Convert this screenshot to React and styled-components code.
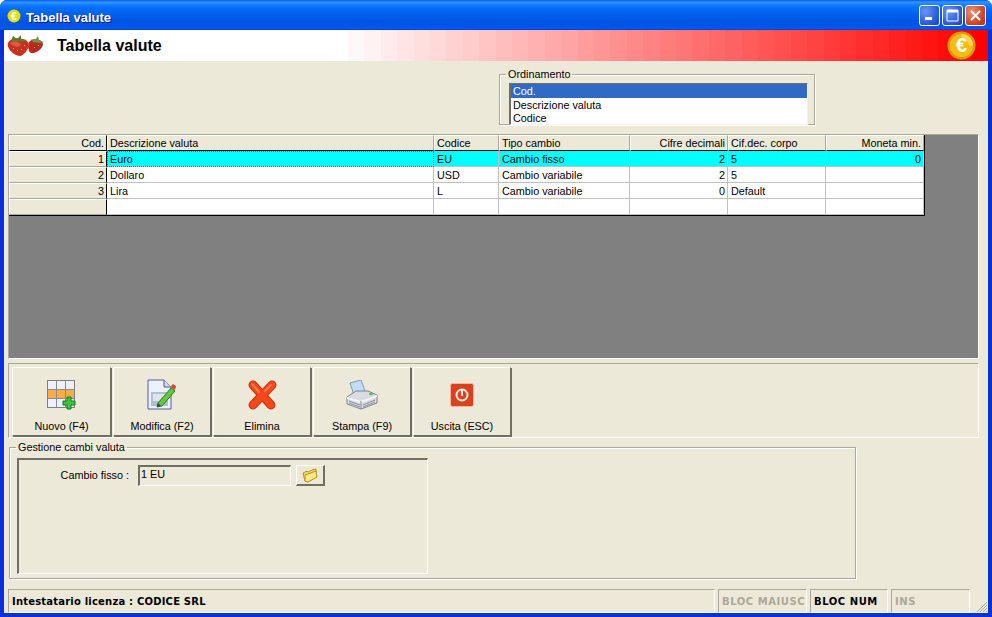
import React from 'react';
import styled, { createGlobalStyle } from 'styled-components';

const GlobalStyle = createGlobalStyle`
  html, body { margin: 0; padding: 0; background: #fff; }
  body { font-family: "Liberation Sans", Arial, sans-serif; font-size: 10.8px; color: #000; }
`;

const columns = [
  { title: 'Cod.', width: 98, right: true },
  { title: 'Descrizione valuta', width: 327 },
  { title: 'Codice', width: 65 },
  { title: 'Tipo cambio', width: 131 },
  { title: 'Cifre decimali', width: 98, right: true },
  { title: 'Cif.dec. corpo', width: 98 },
  { title: 'Moneta min.', width: 98, right: true },
];

const rows = [
  ['1', 'Euro', 'EU', 'Cambio fisso', '2', '5', '0'],
  ['2', 'Dollaro', 'USD', 'Cambio variabile', '2', '5', ''],
  ['3', 'Lira', 'L', 'Cambio variabile', '0', 'Default', ''],
  ['', '', '', '', '', '', ''],
];

// the banner fades in visible bands, not smoothly
const bannerBands = () => {
  const start = 344;
  const end = 984;
  const band = 16.4;
  const stops = ['#fff 0', `#fff ${start}px`];
  for (let x = start; x < end; x += band) {
    const t = (x - start + band) / (end - start);
    const v = Math.max(0, Math.round(255 - t * 255));
    stops.push(`rgb(255,${v},${v}) ${x}px`, `rgb(255,${v},${v}) ${x + band}px`);
  }
  return `linear-gradient(90deg, ${stops.join(',')})`;
};

const Frame = styled.div`
  width: 992px;
  height: 617px;
  display: flex;
  flex-direction: column;
  overflow: hidden;
  border-radius: 7px 7px 0 0;
  background: #0831d9;
`;

const TitleBar = styled.div`
  height: 30px;
  flex: none;
  display: flex;
  align-items: center;
  padding: 1px 7px 0;
  box-sizing: border-box;
  background: linear-gradient(180deg, #0058ee 0, #3593ff 2px, #288eff 3px, #127dff 5px, #036ffc 8px, #0262ee 13px, #0057e5 20px, #0054e3 24px, #0055eb 27px, #005bf5 29px, #0031b0 30px);
`;

const TitleText = styled.span`
  margin: 3px 0 0 5px;
  color: #fff;
  font-family: "Liberation Sans", Arial, sans-serif;
  font-size: 13px;
  font-weight: 700;
  text-shadow: 1px 1px #0f1089;
`;

const WindowControls = styled.div`
  margin-left: auto;
  display: flex;
  gap: 2px;
  margin-right: -1px;
`;

const WindowButton = styled.div`
  width: 21px;
  height: 21px;
  box-sizing: border-box;
  border: 1px solid #fff;
  border-radius: 3px;
  background: ${(p) =>
    p.$close
      ? 'radial-gradient(circle at 30% 30%, #e8917a, #d3492a 60%, #b5310f)'
      : 'radial-gradient(circle at 30% 30%, #6d96f2, #2f5fdc 60%, #1c3fbd)'};
  display: flex;
  align-items: center;
  justify-content: center;
`;

const Client = styled.div`
  flex: 1;
  margin: 0 4px 4px;
  background: #ece9d8;
  display: flex;
  flex-direction: column;
  min-height: 0;
`;

const Banner = styled.div`
  height: 31px;
  flex: none;
  display: flex;
  align-items: center;
  padding: 0 12px 0 3px;
  box-sizing: border-box;
  background: ${bannerBands()};
`;

const BannerTitle = styled.h1`
  margin: 0 0 0 13px;
  font-size: 16px;
  font-weight: 700;
  font-family: "Liberation Sans", Arial, sans-serif;
`;

const BannerCoin = styled.div`
  margin-left: auto;
  display: flex;
`;

const SortArea = styled.div`
  height: 73px;
  flex: none;
  box-sizing: border-box;
  padding: 8px 0 0 495px;
`;

const GroupBox = styled.fieldset`
  margin: 0;
  box-sizing: border-box;
  width: ${(p) => p.$width}px;
  height: ${(p) => p.$height}px;
  padding: 0;
  border: 1px solid #aca899;
  box-shadow: 1px 1px 0 #fff, inset 1px 1px 0 #fff;
  border-radius: 0;
  display: block;
  min-width: 0;
`;

const GroupLegend = styled.legend`
  margin-left: 6px;
  padding: 0 2px;
  font-size: 10.8px;
  line-height: 11px;
  color: #000;
`;

const SortList = styled.ul`
  list-style: none;
  margin: 3px 0 0 9px;
  padding: 0;
  width: 299px;
  height: 42px;
  box-sizing: border-box;
  background: #fff;
  border-top: 1px solid #716f64;
  border-left: 2px solid #716f64;
  border-right: 1px solid #f5f3ea;
  border-bottom: 1px solid #f5f3ea;
`;

const SortItem = styled.li`
  height: ${(p) => (p.$selected ? 14 : 13)}px;
  line-height: 14px;
  padding-left: 2px;
  background: ${(p) => (p.$selected ? '#316ac5' : 'transparent')};
  color: ${(p) => (p.$selected ? '#fff' : '#000')};
`;

const GridArea = styled.div`
  height: 225px;
  flex: none;
  margin: 0 9px 0 4px;
  background: #808080;
  box-sizing: border-box;
  border-top: 1px solid #aca899;
  border-left: 1px solid #aca899;
  border-right: 1px solid #fff;
  border-bottom: 1px solid #fff;
`;

const Grid = styled.div`
  width: 916px;
  border-right: 1px solid #000;
  border-bottom: 1px solid #000;
  box-sizing: border-box;
`;

const GridRow = styled.div`
  display: flex;
  height: 16px;
  box-sizing: border-box;
  background: ${(p) => (p.$active ? '#00ffff' : '#fff')};
`;

const HeaderCell = styled.div`
  width: ${(p) => p.$width}px;
  box-sizing: border-box;
  flex: none;
  height: 16px;
  line-height: 15px;
  padding: 0 2px;
  white-space: nowrap;
  overflow: hidden;
  text-align: ${(p) => (p.$right ? 'right' : 'left')};
  background: #ece9d8;
  border-top: 1px solid #fff;
  border-left: 1px solid #fff;
  border-bottom: 1px solid #000;
  border-right: 1px solid ${(p) => (p.$first ? '#000' : '#aca899')};
`;

const Cell = styled.div`
  width: ${(p) => p.$width}px;
  box-sizing: border-box;
  flex: none;
  height: 16px;
  line-height: 17px;
  padding: 0 2px 0 3px;
  white-space: nowrap;
  overflow: hidden;
  text-align: ${(p) => (p.$right ? 'right' : 'left')};
  border-bottom: 1px solid #c0c0c0;
  border-right: 1px solid #c0c0c0;
`;

const RowHeadCell = styled(Cell)`
  background: #ece9d8;
  border-top: 1px solid #fff;
  border-left: 1px solid #fff;
  border-bottom: 1px solid #aca899;
  border-right: 1px solid #000;
  line-height: 15px;
`;

const FocusCell = styled(Cell)`
  outline: 1px dotted #e03030;
  outline-offset: -1px;
`;

const ToolPanel = styled.div`
  height: 75px;
  flex: none;
  margin: 4px 9px 0 4px;
  padding: 3px 0 0 3px;
  box-sizing: border-box;
  display: flex;
  gap: 2px;
  border-top: 1px solid #aca899;
  border-left: 1px solid #aca899;
  border-right: 1px solid #fff;
  border-bottom: 1px solid #fff;
`;

const ToolButton = styled.button`
  width: ${(p) => p.$width || 98}px;
  height: 69px;
  box-sizing: border-box;
  padding: 10px 0 0;
  margin: 0;
  display: flex;
  flex-direction: column;
  align-items: center;
  font-family: "Liberation Sans", Arial, sans-serif;
  font-size: 10.8px;
  color: #000;
  background: #ece9d8;
  border-top: 1px solid #fff;
  border-left: 1px solid #fff;
  border-right: 1px solid #716f64;
  border-bottom: 1px solid #716f64;
  box-shadow: 1px 1px 0 #716f64;
`;

const ToolIcon = styled.span`
  height: 34px;
  display: flex;
  align-items: center;
  justify-content: center;
`;

const ToolLabel = styled.span`
  margin-top: 8px;
  line-height: 13px;
`;

const ExchangeArea = styled.div`
  margin: 4px 0 0 5px;
  flex: none;
`;

const InnerPanel = styled.div`
  width: 411px;
  height: 116px;
  margin: 5px 0 0 7px;
  box-sizing: border-box;
  padding: 5px 0 0 0;
  border-top: 2px solid #716f64;
  border-left: 2px solid #716f64;
  border-right: 1px solid #fff;
  border-bottom: 1px solid #fff;
  display: flex;
  align-items: flex-start;
`;

const FieldLabel = styled.label`
  width: 110px;
  flex: none;
  text-align: right;
  line-height: 21px;
`;

const ReadonlyField = styled.div`
  width: 153px;
  height: 21px;
  margin-left: 9px;
  box-sizing: border-box;
  padding-left: 1px;
  line-height: 14px;
  border-top: 2px solid #716f64;
  border-left: 2px solid #716f64;
  border-right: 1px solid #fff;
  border-bottom: 1px solid #fff;
`;

const FolderButton = styled.button`
  width: 29px;
  height: 21px;
  margin: 0 0 0 5px;
  padding: 0;
  display: flex;
  align-items: center;
  justify-content: center;
  box-sizing: border-box;
  background: #ece9d8;
  border-top: 1px solid #fff;
  border-left: 1px solid #fff;
  border-right: 2px solid #716f64;
  border-bottom: 2px solid #716f64;
`;

const StatusBar = styled.div`
  margin: 10px 0 0 4px;
  height: 24px;
  flex: none;
  display: flex;
  gap: 3px;
  position: relative;
`;

const StatusPanel = styled.div`
  width: ${(p) => p.$width}px;
  box-sizing: border-box;
  padding: 1px 0 0 3px;
  line-height: 22px;
  flex: none;
  white-space: nowrap;
  overflow: hidden;
  font-family: "DejaVu Sans", sans-serif;
  font-size: 10px;
  font-weight: 700;
  letter-spacing: ${(p) => (p.$key ? '0.55px' : '0.2px')};
  color: ${(p) => (p.$off ? '#aca899' : '#000')};
  border-top: 1px solid #aca899;
  border-left: 1px solid #aca899;
  border-right: 1px solid #fff;
  border-bottom: 1px solid #fff;
`;

const Grip = styled.svg`
  position: absolute;
  right: 0;
  bottom: 0;
`;

const FruitIcon = () => (
  <svg width="37" height="22" viewBox="0 0 37 22">
    <path d="M23 6 C27 3 35 4 36 9 C36 14 28 19 24 18 C21 17 20 9 23 6 Z" fill="#b52c1c" />
    <path d="M1 8 C4 2 16 2 21 7 C24 11 18 20 13 21 C8 21 -1 14 1 8 Z" fill="#c83020" />
    <path d="M3 8 C7 5 12 6 14 10 C11 13 6 12 3 8 Z" fill="#de5a3c" />
    <g fill="#e8a080">
      <rect x="6" y="13" width="1" height="1" /><rect x="10" y="15" width="1" height="1" />
      <rect x="14" y="14" width="1" height="1" /><rect x="17" y="10" width="1" height="1" />
      <rect x="27" y="12" width="1" height="1" /><rect x="31" y="10" width="1" height="1" />
    </g>
    <path d="M6 1 L10 4 L14 0 L14 4 L20 5 L16 7 L10 6 L4 6 Z" fill="#5d7a2e" />
    <path d="M24 4 L28 5 L31 1 L32 5 L37 7 L32 8 L26 7 Z" fill="#7c9440" />
  </svg>
);

const CoinIcon = () => (
  <svg width="29" height="29" viewBox="0 0 29 29">
    <circle cx="14.5" cy="14.5" r="14" fill="#d99a08" />
    <circle cx="14.5" cy="14.5" r="11.5" fill="#f4bd13" />
    <path d="M14.5 3 A11.5 11.5 0 0 1 26 14.5 L22 14.5 A8 8 0 0 0 14.5 7 Z" fill="#fbd64a" />
    <text x="14.5" y="21" textAnchor="middle" fontFamily="Liberation Sans" fontWeight="700" fontSize="20" fill="#fff">€</text>
  </svg>
);

const TitleCoin = () => (
  <svg width="14" height="14" viewBox="0 0 14 14">
    <circle cx="7" cy="7" r="6.5" fill="#e6e000" />
    <text x="7" y="11" textAnchor="middle" fontFamily="Liberation Sans" fontWeight="700" fontSize="11" fill="#fff">€</text>
  </svg>
);

const NewIcon = () => (
  <svg width="30" height="30" viewBox="0 0 30 30">
    <rect x="0.500" y="0.500" width="27" height="27" fill="#eef0fb" stroke="#7f7f86" />
    <rect x="1" y="10" width="26" height="8.500" fill="#f5ad48" />
    <path d="M9.500 1 V27 M18.500 1 V27 M1 9.500 H27 M1 18.500 H27" stroke="#8a8a90" fill="none" />
    <path d="M20 17 H24 V21 H28 V25 H24 V29 H20 V25 H16 V21 H20 Z" fill="#3ec43c" stroke="#0f7a1c" />
  </svg>
);

const EditIcon = () => (
  <svg width="30" height="32" viewBox="0 0 30 32">
    <path d="M1 1 H17 L24 8 V30 H1 Z" fill="#eef1fb" stroke="#4a5f9c" />
    <path d="M17 1 V8 H24" fill="#cfd8f0" stroke="#4a5f9c" />
    <rect x="4" y="13" width="17" height="14" fill="#b4bdd6" />
    <rect x="6" y="15" width="13" height="7" fill="#dfe3ee" />
    <path d="M11 24 L24 9 L28 12 L15 27 L10 28 Z" fill="#63c83c" stroke="#2f7a22" />
    <path d="M24 7 L26 5 L29 7 L28 11 L25 9 Z" fill="#d8432a" />
    <path d="M10 28 L11 24 L14 27 Z" fill="#444" />
  </svg>
);

const DeleteIcon = () => (
  <svg width="30" height="30" viewBox="0 0 30 30">
    <path d="M6 5 L24 25 M25 5 L6 25" stroke="#c2300c" strokeWidth="9" strokeLinecap="round" fill="none" />
    <path d="M6 5 L24 25 M25 5 L6 25" stroke="#f4481c" strokeWidth="7" strokeLinecap="round" fill="none" />
    <path d="M5 4 L12 12 M24 5 L18 11" stroke="#fb7a4a" strokeWidth="2" strokeLinecap="round" fill="none" />
  </svg>
);

const PrintIcon = () => (
  <svg width="32" height="30" viewBox="0 0 32 30">
    <path d="M4 3 L15 0 L19 11 L8 15 Z" fill="#c5dcf7" stroke="#7c9ac0" />
    <path d="M1 17 L10 11 H22 L31 15 V23 L15 29 L1 24 Z" fill="#d9dce3" stroke="#80848e" />
    <path d="M1 17 L15 21 L31 15 V17 L15 23 L1 19 Z" fill="#f5f6f8" />
    <path d="M15 21 V29 M3 21 L14 25 M3 23 L14 27 M17 25 L29 20 M17 27 L29 22" stroke="#8a8e98" fill="none" />
    <ellipse cx="25" cy="14" rx="2" ry="1.200" fill="#4fc34a" />
  </svg>
);

const ExitIcon = () => (
  <svg width="24" height="24" viewBox="0 0 24 24">
    <rect x="0.500" y="0.500" width="23" height="23" rx="2" fill="#d8421c" stroke="#f0b8a0" />
    <circle cx="12" cy="12" r="5.500" fill="none" stroke="#fbe9e0" strokeWidth="2" />
    <path d="M12 7 V13" stroke="#fbe9e0" strokeWidth="2" />
  </svg>
);

const FolderIcon = () => (
  <svg width="16" height="15" viewBox="0 0 16 15">
    <path d="M1 5 L5 3 L6 4 L10 2 L14 1 V9 L6 14 L3 13 Z" fill="#f8d860" stroke="#b89020" />
    <path d="M3 7 L14 3 L15 9 L6 14 L3 13 Z" fill="#fbe888" stroke="#b89020" />
  </svg>
);

const tools = [
  { label: 'Nuovo (F4)', icon: <NewIcon />, width: 99 },
  { label: 'Modifica (F2)', icon: <EditIcon /> },
  { label: 'Elimina', icon: <DeleteIcon /> },
  { label: 'Stampa (F9)', icon: <PrintIcon /> },
  { label: 'Uscita (ESC)', icon: <ExitIcon /> },
];

export default function App() {
  return (
    <Frame>
      <GlobalStyle />
      <TitleBar>
        <TitleCoin />
        <TitleText>Tabella valute</TitleText>
        <WindowControls>
          <WindowButton>
            <svg width="11" height="11" viewBox="0 0 11 11"><rect x="1" y="7" width="7" height="3" fill="#fff" /></svg>
          </WindowButton>
          <WindowButton>
            <svg width="13" height="13" viewBox="0 0 13 13"><path d="M1 1 H12 V12 H1 Z M1 3 H12" fill="none" stroke="#fff" strokeWidth="1" /><rect x="1" y="1" width="11" height="2" fill="#fff" /></svg>
          </WindowButton>
          <WindowButton $close>
            <svg width="13" height="13" viewBox="0 0 13 13"><path d="M2 2 L11 11 M11 2 L2 11" stroke="#fff" strokeWidth="2" /></svg>
          </WindowButton>
        </WindowControls>
      </TitleBar>
      <Client>
        <Banner>
          <FruitIcon />
          <BannerTitle>Tabella valute</BannerTitle>
          <BannerCoin><CoinIcon /></BannerCoin>
        </Banner>
        <SortArea>
          <GroupBox $width={316} $height={56}>
            <GroupLegend>Ordinamento</GroupLegend>
            <SortList>
              <SortItem $selected>Cod.</SortItem>
              <SortItem>Descrizione valuta</SortItem>
              <SortItem>Codice</SortItem>
            </SortList>
          </GroupBox>
        </SortArea>
        <GridArea>
          <Grid>
            <GridRow>
              {columns.map((c, i) => (
                <HeaderCell key={c.title} $width={c.width} $right={c.right} $first={i === 0}>{c.title}</HeaderCell>
              ))}
            </GridRow>
            {rows.map((row, r) => (
              <GridRow key={r} $active={r === 0}>
                {row.map((value, i) => {
                  const C = i === 0 ? RowHeadCell : r === 0 && i === 1 ? FocusCell : Cell;
                  return <C key={i} $width={columns[i].width} $right={columns[i].right}>{value}</C>;
                })}
              </GridRow>
            ))}
          </Grid>
        </GridArea>
        <ToolPanel>
          {tools.map((t) => (
            <ToolButton key={t.label} $width={t.width}>
              <ToolIcon>{t.icon}</ToolIcon>
              <ToolLabel>{t.label}</ToolLabel>
            </ToolButton>
          ))}
        </ToolPanel>
        <ExchangeArea>
          <GroupBox $width={847} $height={137}>
            <GroupLegend>Gestione cambi valuta</GroupLegend>
            <InnerPanel>
              <FieldLabel>Cambio fisso :</FieldLabel>
              <ReadonlyField>1 EU</ReadonlyField>
              <FolderButton><FolderIcon /></FolderButton>
            </InnerPanel>
          </GroupBox>
        </ExchangeArea>
        <StatusBar>
          <StatusPanel $width={707}>Intestatario licenza : CODICE SRL</StatusPanel>
          <StatusPanel $width={89} $key $off>BLOC MAIUSC</StatusPanel>
          <StatusPanel $width={78} $key>BLOC NUM</StatusPanel>
          <StatusPanel $width={79} $key $off>INS</StatusPanel>
          <Grip width="14" height="14" viewBox="0 0 14 14">
            <path d="M13 3 L3 13 M13 6 L6 13 M13 9 L9 13 M13 12 L12 13" stroke="#aca899" fill="none" />
          </Grip>
        </StatusBar>
      </Client>
    </Frame>
  );
}
